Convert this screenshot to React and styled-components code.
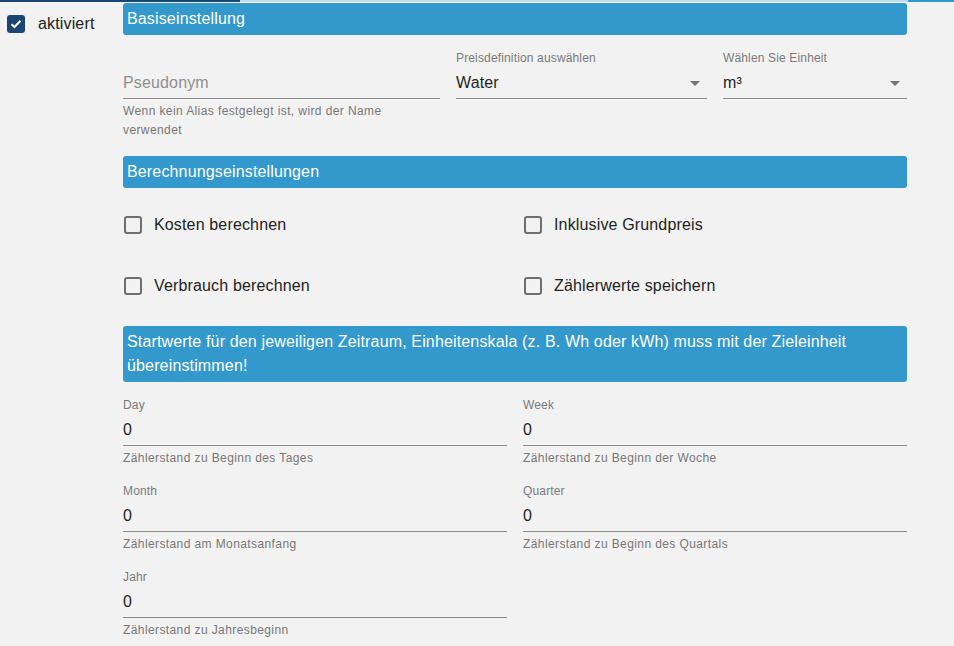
import React from "react";
import styled, { createGlobalStyle } from "styled-components";

const GlobalStyle = createGlobalStyle`
  html, body {
    margin: 0;
    padding: 0;
    background: #f2f2f2;
    font-family: "Liberation Sans", Arial, sans-serif;
    letter-spacing: 0.15px;
  }
`;

const TopLine = styled.div`
  height: 2px;
  background: linear-gradient(
    to right,
    #1b4572 0px,
    #1b4572 240px,
    rgba(51, 153, 204, 0.25) 240px,
    rgba(51, 153, 204, 0.25) 908px,
    #3399cc 908px
  );
`;

const Page = styled.div`
  display: flex;
  align-items: flex-start;
`;

const Side = styled.div`
  width: 115px;
  box-sizing: border-box;
  padding: 1px 0 0 6px;
`;

const Main = styled.div`
  width: 800px;
  padding-top: 1px;
`;

const Section = styled.div`
  padding: 0 8px;
  margin-top: ${(p) => p.$top || 0}px;
`;

const Header = styled.div`
  background: #3399cc;
  color: #fff;
  font-size: 16px;
  line-height: 24px;
  padding: 4px 4px;
  border-radius: 3px;
`;

const Grid = styled.div`
  display: grid;
  grid-template-columns: ${(p) => p.$cols};
  column-gap: 16px;
  row-gap: ${(p) => p.$rowGap || 0}px;
  padding: 0 8px;
  margin-top: ${(p) => p.$top || 0}px;
`;

const Field = styled.div`
  display: flex;
  flex-direction: column;
  min-width: 0;
`;

const Label = styled.div`
  font-size: 12px;
  line-height: 16px;
  height: 16px;
  color: #7a7a7a;
  margin-bottom: 5px;
`;

const InputLine = styled.div`
  display: flex;
  align-items: center;
  justify-content: space-between;
  height: 24px;
  padding-bottom: 3px;
  border-bottom: 1px solid #8c8c8c;
  font-size: 16px;
  line-height: 24px;
  color: ${(p) => (p.$placeholder ? "#8f8f8f" : "#1f1f1f")};
`;

const Helper = styled.div`
  font-size: 12px;
  line-height: 19px;
  letter-spacing: 0.4px;
  color: #777;
  margin-top: 3px;
  max-width: ${(p) => p.$max || "none"};
`;

const Arrow = styled.span`
  width: 0;
  height: 0;
  border-left: 5px solid transparent;
  border-right: 5px solid transparent;
  border-top: 5px solid #757575;
  margin-right: 7px;
`;

const CheckRow = styled.label`
  display: flex;
  align-items: center;
  height: 42px;
  font-size: 16px;
  color: #222;
  gap: ${(p) => p.$gap || 12}px;
`;

const Box = styled.span`
  width: 18px;
  height: 18px;
  box-sizing: border-box;
  border-radius: 3px;
  margin-left: 1px;
  display: flex;
  align-items: center;
  justify-content: center;
  flex-shrink: 0;
  background: ${(p) => (p.$checked ? "#1b4572" : "transparent")};
  border: ${(p) => (p.$checked ? "none" : "2px solid #6f6f6f")};
`;

function Check({ checked, label, gap }) {
  return (
    <CheckRow $gap={gap}>
      <Box $checked={checked}>
        {checked && (
          <svg width="12" height="10" viewBox="0 0 12 10">
            <path d="M1.5 5.2 L4.5 8 L10.5 1.8" fill="none" stroke="#fff" strokeWidth="2" />
          </svg>
        )}
      </Box>
      {label}
    </CheckRow>
  );
}

function TextField({ label, value, placeholder, helper, helperMax, select }) {
  return (
    <Field>
      <Label>{label}</Label>
      <InputLine $placeholder={!value}>
        <span>{value || placeholder}</span>
        {select && <Arrow />}
      </InputLine>
      {helper && <Helper $max={helperMax}>{helper}</Helper>}
    </Field>
  );
}

const startFields = [
  { label: "Day", helper: "Zählerstand zu Beginn des Tages" },
  { label: "Week", helper: "Zählerstand zu Beginn der Woche" },
  { label: "Month", helper: "Zählerstand am Monatsanfang" },
  { label: "Quarter", helper: "Zählerstand zu Beginn des Quartals" },
  { label: "Jahr", helper: "Zählerstand zu Jahresbeginn" },
];

export default function App() {
  return (
    <>
      <GlobalStyle />
      <TopLine />
      <Page>
        <Side>
          <Check checked label="aktiviert" gap={13} />
        </Side>
        <Main>
          <Section>
            <Header>Basiseinstellung</Header>
          </Section>
          <Grid $cols="317px 251px 184px" $top={15}>
            <TextField
              placeholder="Pseudonym"
              helper="Wenn kein Alias festgelegt ist, wird der Name verwendet"
              helperMax="300px"
            />
            <TextField label="Preisdefinition auswählen" value="Water" select />
            <TextField label="Wählen Sie Einheit" value="m³" select />
          </Grid>
          <Section $top={16}>
            <Header>Berechnungseinstellungen</Header>
          </Section>
          <Grid $cols="1fr 1fr" $top={16} $rowGap={19}>
            <Check label="Kosten berechnen" />
            <Check label="Inklusive Grundpreis" />
            <Check label="Verbrauch berechnen" />
            <Check label="Zählerwerte speichern" />
          </Grid>
          <Section $top={19}>
            <Header>
              Startwerte für den jeweiligen Zeitraum, Einheitenskala (z. B. Wh oder kWh) muss mit der Zieleinheit
              übereinstimmen!
            </Header>
          </Section>
          <Grid $cols="1fr 1fr" $top={15} $rowGap={15}>
            {startFields.map((f) => (
              <TextField key={f.label} label={f.label} value="0" helper={f.helper} />
            ))}
          </Grid>
        </Main>
      </Page>
    </>
  );
}
